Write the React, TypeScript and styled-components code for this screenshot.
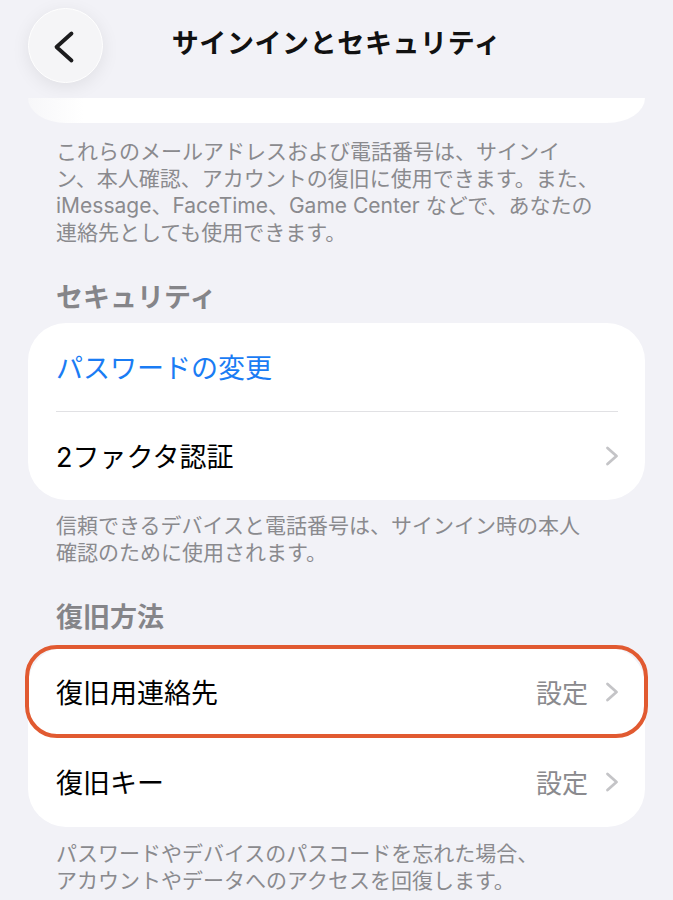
import React from "react";
import styled, { createGlobalStyle } from "styled-components";

const Colors = {
  background: "#f2f2f7",
  card: "#ffffff",
  label: "#000000",
  secondary: "#8a8a8e",
  heading: "#858589",
  blue: "#1a7cf4",
  chevron: "#c4c4c7",
  separator: "#e1e1e4",
  highlight: "#e15a31",
};

const GlobalStyle = createGlobalStyle`
  html, body {
    margin: 0;
    padding: 0;
    background: ${Colors.background};
  }
  body {
    font-family: "Inter", "Noto Sans CJK JP", sans-serif;
    -webkit-font-smoothing: antialiased;
  }
`;

interface Row {
  label: string;
  value?: string;
  chevron?: boolean;
  tone?: "link" | "normal";
  highlighted?: boolean;
}

interface Section {
  heading: string;
  headingGap: number;
  rows: Row[];
  footer: string[];
  footerGap: number;
}

const sections: Section[] = [
  {
    heading: "セキュリティ",
    headingGap: 8,
    rows: [
      { label: "パスワードの変更", tone: "link" },
      { label: "2ファクタ認証", chevron: true },
    ],
    footer: [
      "信頼できるデバイスと電話番号は、サインイン時の本人",
      "確認のために使用されます。",
    ],
    footerGap: 12,
  },
  {
    heading: "復旧方法",
    headingGap: 12,
    rows: [
      { label: "復旧用連絡先", value: "設定", chevron: true, highlighted: true },
      { label: "復旧キー", value: "設定", chevron: true },
    ],
    footer: [
      "パスワードやデバイスのパスコードを忘れた場合、",
      "アカウントやデータへのアクセスを回復します。",
    ],
    footerGap: 13,
  },
];

const introFooter = [
  "これらのメールアドレスおよび電話番号は、サインイ",
  "ン、本人確認、アカウントの復旧に使用できます。また、",
  "iMessage、FaceTime、Game Center などで、あなたの",
  "連絡先としても使用できます。",
];

const Chevron: React.FC = () => (
  <ChevronIcon width="15" height="20" viewBox="0 0 15 20" aria-hidden>
    <polyline
      points="2.5,2 11.5,10 2.5,18"
      fill="none"
      stroke={Colors.chevron}
      strokeWidth="2.8"
      strokeLinecap="round"
      strokeLinejoin="round"
    />
  </ChevronIcon>
);

export default function App() {
  return (
    <>
      <GlobalStyle />
      <Page>
        <Header>
          <BackButton aria-label="戻る">
            <svg width="75" height="75" viewBox="0 0 75 75">
              <polyline
                points="43.5,25.5 28.5,39 43.5,52.5"
                fill="none"
                stroke="#1c1c1e"
                strokeWidth="3.8"
                strokeLinecap="round"
                strokeLinejoin="round"
              />
            </svg>
          </BackButton>
          <Title>サインインとセキュリティ</Title>
          <span />
        </Header>

        <CardStub />

        <Footer $gap={15}>
          {introFooter.map((line) => (
            <FooterLine key={line}>{line}</FooterLine>
          ))}
        </Footer>

        {sections.map((section) => (
          <React.Fragment key={section.heading}>
            <Heading>{section.heading}</Heading>
            <Card $gap={section.headingGap}>
              {section.rows.map((row, index) => (
                <React.Fragment key={row.label}>
                  {index > 0 && !row.highlighted && !section.rows[index - 1].highlighted && (
                    <Separator />
                  )}
                  <RowItem $highlighted={!!row.highlighted} $tall={section.rows.some((r) => r.highlighted)}>
                    <RowLabel $tone={row.tone ?? "normal"}>{row.label}</RowLabel>
                    <RowTrail>
                      {row.value && <RowValue>{row.value}</RowValue>}
                      {row.chevron && <Chevron />}
                    </RowTrail>
                  </RowItem>
                </React.Fragment>
              ))}
            </Card>
            <Footer $gap={section.footerGap}>
              {section.footer.map((line) => (
                <FooterLine key={line}>{line}</FooterLine>
              ))}
            </Footer>
          </React.Fragment>
        ))}
      </Page>
    </>
  );
}

const Page = styled.div`
  width: 673px;
  min-height: 900px;
  background: ${Colors.background};
  padding-bottom: 40px;
`;

const Header = styled.div`
  display: grid;
  grid-template-columns: 75px 1fr 75px;
  align-items: center;
  height: 85px;
  padding: 0 28px;
  box-sizing: border-box;
`;

const BackButton = styled.button`
  width: 75px;
  height: 75px;
  margin-top: 5px;
  padding: 0;
  border-radius: 50%;
  border: 1.5px solid #ffffff;
  background: #f5f5f7;
  box-shadow: 0 4px 18px rgba(0, 0, 0, 0.08);
  display: flex;
  align-items: center;
  justify-content: center;
  box-sizing: border-box;
  svg {
    display: block;
    flex: none;
  }
`;

const Title = styled.h1`
  margin: 0;
  padding-top: 3px;
  text-align: center;
  font-size: 27px;
  font-weight: 700;
  line-height: 34px;
  color: #111111;
  letter-spacing: 0.6px;
`;

const CardStub = styled.div`
  margin: 13px 28px 0;
  height: 25px;
  background: linear-gradient(90deg, #f7f7f9 0%, #ffffff 9%, #ffffff 100%);
  border-radius: 0 0 38px 38px / 0 0 25px 25px;
`;

const Footer = styled.div<{ $gap: number }>`
  padding: ${({ $gap }) => $gap}px 28px 0 56px;
  font-size: 21px;
  line-height: 27px;
  color: ${Colors.secondary};
`;

const FooterLine = styled.span`
  display: block;
  white-space: nowrap;
`;

const Heading = styled.h2`
  margin: 32px 0 0;
  padding: 3px 0 0 56px;
  font-size: 27px;
  font-weight: 700;
  line-height: 34px;
  color: ${Colors.heading};
`;

const Card = styled.div<{ $gap: number }>`
  margin: ${({ $gap }) => $gap}px 28px 0;
  background: ${Colors.card};
  border-radius: 38px;
`;

const RowItem = styled.div<{ $highlighted: boolean; $tall: boolean }>`
  position: relative;
  display: flex;
  align-items: center;
  justify-content: space-between;
  height: ${({ $tall }) => ($tall ? 90 : 88)}px;
  padding: 0 27px 0 28px;

  ${({ $highlighted }) =>
    $highlighted &&
    `
    &::after {
      content: "";
      position: absolute;
      top: -2px;
      bottom: -1px;
      left: -3px;
      right: -3px;
      border: 4px solid ${Colors.highlight};
      border-radius: 32px;
      pointer-events: none;
    }
  `}
`;

const RowLabel = styled.span<{ $tone: "link" | "normal" }>`
  padding-top: 4px;
  font-size: 27px;
  line-height: 34px;
  color: ${({ $tone }) => ($tone === "link" ? Colors.blue : Colors.label)};
`;

const RowTrail = styled.div`
  display: flex;
  align-items: center;
  gap: 17px;
`;

const RowValue = styled.span`
  padding-top: 4px;
  font-size: 26px;
  line-height: 34px;
  color: ${Colors.secondary};
`;

const ChevronIcon = styled.svg`
  display: block;
  margin-right: -2px;
`;

const Separator = styled.div`
  height: 1px;
  margin: 0 27px 0 28px;
  background: ${Colors.separator};
`;
